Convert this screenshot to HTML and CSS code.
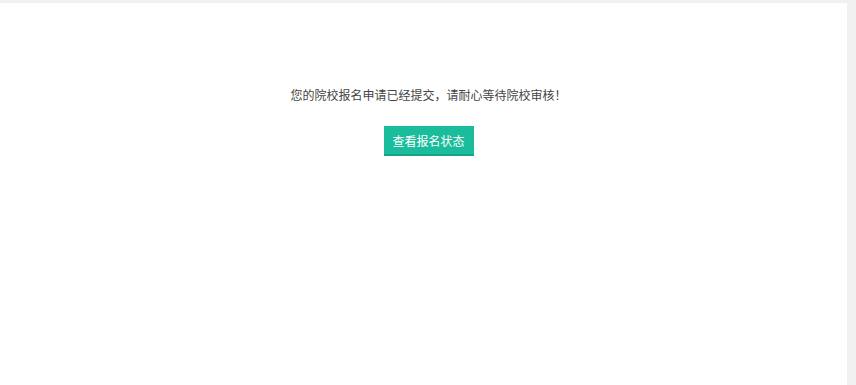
FILE: index.html
```html
<!DOCTYPE html>
<html lang="zh-CN">
<head>
  <meta charset="UTF-8" />
  <meta name="viewport" content="width=device-width, initial-scale=1.0"/>
  <title>院校报名</title>
  <link rel="stylesheet" href="styles.css">
</head>
<body>
  <div class="panel">
    <p class="notice">您的院校报名申请已经提交，请耐心等待院校审核！</p>
    <button class="status-btn" type="button">查看报名状态</button>
  </div>
</body>
</html>
```
FILE: styles.css
```css
* { box-sizing: border-box; }
html, body { height: 100%; }
body {
  margin: 0;
  padding: 3px 9px 0 0;
  background: #f0f0f0;
  font-family: "Microsoft YaHei", "Noto Sans CJK SC", sans-serif;
  color: #333;
}

.panel {
  background: #fff;
  height: 100%;
  padding: 84px 0 0 10px;
  display: flex;
  flex-direction: column;
  align-items: center;
}

.notice {
  margin: 0;
  font-size: 12px;
  line-height: 16px;
  color: #444;
}

.status-btn {
  margin-top: 23px;
  width: 90px;
  height: 30px;
  padding: 0;
  background: #1abc9c;
  color: #fff;
  border: none;
  border-bottom: 2px solid #16a487;
  font-family: inherit;
  font-size: 12px;
  cursor: pointer;
}
```
